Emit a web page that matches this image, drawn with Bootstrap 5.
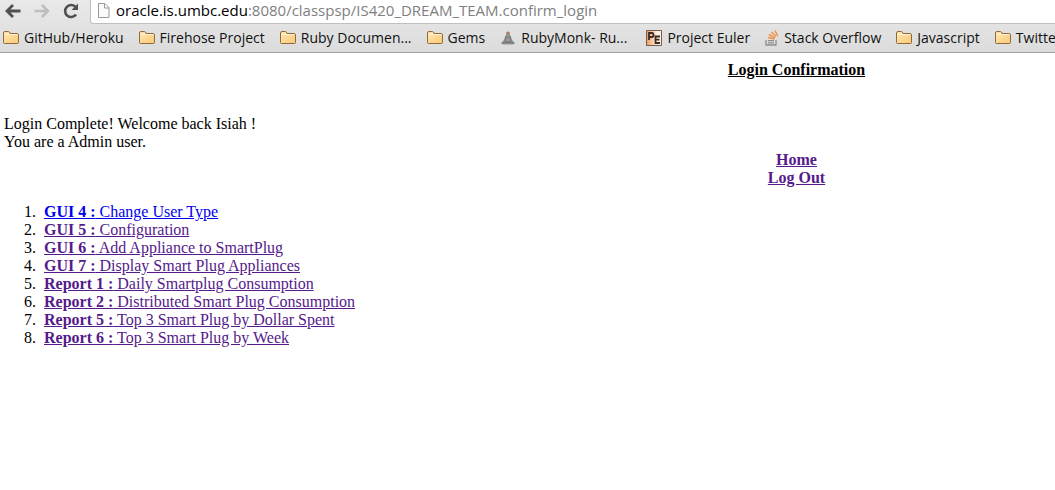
<!DOCTYPE html>
<html lang="en">
<head>
<meta charset="utf-8">
<meta name="viewport" content="width=device-width, initial-scale=1">
<title>Login Confirmation</title>
<link href="https://cdn.jsdelivr.net/npm/bootstrap@5.3.0/dist/css/bootstrap.min.css" rel="stylesheet">
<style>
body { background: #fff; color: #000; font: 16px/18px "Liberation Serif", serif; overflow-x: hidden; }
.browser { background: linear-gradient(#e9e9e9, #dcdcdc); border-bottom: 1px solid #a0a0a0; font-family: "Open Sans", "Noto Sans", sans-serif; overflow: hidden; }
.toolbar-row { height: 24px; }
.tool { width: 29px; height: 21px; }
.tool svg { margin-right: 4px; }
.address { background: #fff; border: 1px solid #bfbfbf; border-top: 0; border-right: 0; border-bottom-left-radius: 3px; margin-left: 3px; padding-left: 6px; height: 24px; }
.url { font-size: 15px; line-height: 20px; color: #808080; white-space: nowrap; }
.url b { font-weight: 400; color: #000; }
.page-mark { margin-right: 6px; }
.bookmarks { height: 28px; padding-left: 3px; gap: 15px; }
.bookmarks a { color: #111; font-size: 14px; line-height: 20px; gap: 5px; }
.wide { width: 151%; padding: 8px 4px; }
.wide a { color: #551a8b; }
.wide a.fresh { color: #00e; }
.notice { margin-top: 36px; }
.choices { padding-left: 36px; margin: 16px 0; }
.choices li { padding-left: 4px; }
</style>
</head>
<body>
<svg class="position-absolute" width="0" height="0" aria-hidden="true">
  <defs>
    <linearGradient id="fold" x2="1" y2="1"><stop stop-color="#ffe9b5"/><stop offset="1" stop-color="#fbc873"/></linearGradient>
    <linearGradient id="eul" x2="1"><stop stop-color="#f09a5c"/><stop offset=".7" stop-color="#fff2e6"/></linearGradient>
  </defs>
  <symbol id="folder" viewBox="0 0 16 16"><path d="M.5 12.500V3Q.5 1.500 2 1.500H5.500Q6.500 1.500 7 3.500H14Q15.500 3.500 15.500 5V12.500Q15.500 13.500 14.500 13.500H1.500Q.5 13.500 .5 12.500Z" fill="url(#fold)" stroke="#8e693c"/><path d="M1.500 4.500H14.500" stroke="#fff3d3"/></symbol>
</svg>
<header class="browser">
  <div class="toolbar-row d-flex">
    <button class="tool btn p-0 border-0 d-flex align-items-center justify-content-center" aria-label="Back"><svg width="18" height="16" viewBox="0 0 18 16" fill="none" stroke="#505050" stroke-width="2.800"><path d="M16.500 8H3M9 2L3 8l6 6"/></svg></button>
    <button class="tool btn p-0 border-0 d-flex align-items-center justify-content-center" aria-label="Forward"><svg width="18" height="16" viewBox="0 0 18 16" fill="none" stroke="#bdbdbd" stroke-width="2.500"><path d="M1.500 8H15M9 2l6 6-6 6"/></svg></button>
    <button class="tool btn p-0 border-0 d-flex align-items-center justify-content-center" aria-label="Reload"><svg width="18" height="18" viewBox="0 0 18 18"><path d="M14 12.500A6 6 0 1 1 13.300 4.700" fill="none" stroke="#505050" stroke-width="2.600"/><path d="M16 1.500V8H9.500Z" fill="#505050"/></svg></button>
    <div class="address flex-grow-1 d-flex align-items-start">
      <svg class="page-mark flex-shrink-0" width="13" height="22" viewBox="0 0 13 22" fill="#fafafa" stroke="#999"><path d="M1.500 3.500H8L12 7.500V17.500H1.500ZM7.500 3.500V8H12"/></svg>
      <div class="url"><b>oracle.is.umbc.edu</b>:8080/classpsp/IS420_DREAM_TEAM.confirm_login</div>
    </div>
  </div>
  <nav class="bookmarks d-flex align-items-center text-nowrap" aria-label="Bookmarks">
    <a href="#" class="d-flex align-items-center flex-shrink-0 text-decoration-none"><svg width="16" height="16"><use href="#folder"/></svg>GitHub/Heroku</a>
    <a href="#" class="d-flex align-items-center flex-shrink-0 text-decoration-none"><svg width="16" height="16"><use href="#folder"/></svg>Firehose Project</a>
    <a href="#" class="d-flex align-items-center flex-shrink-0 text-decoration-none"><svg width="16" height="16"><use href="#folder"/></svg>Ruby Documen...</a>
    <a href="#" class="d-flex align-items-center flex-shrink-0 text-decoration-none"><svg width="16" height="16"><use href="#folder"/></svg>Gems</a>
    <a href="#" class="d-flex align-items-center flex-shrink-0 text-decoration-none me-1"><svg width="16" height="16" viewBox="0 0 16 16"><path d="M5.500 5.500Q8 4 10.500 5.500L12 10L15 13Q14 15 8 14.500Q2 15 1 13L4 10Z" fill="#8b918c"/><circle cx="8" cy="3.500" r="2" fill="#a9806c"/><path d="M6 6L5 11L8 12.500L11 11L10 6M2 13L8 12L14 13" fill="none" stroke="#6e7571" stroke-width=".8"/><path d="M6 10h4" stroke="#c7a58e"/></svg>RubyMonk- Ru...</a>
    <a href="#" class="d-flex align-items-center flex-shrink-0 text-decoration-none"><svg width="16" height="16" viewBox="0 0 16 16"><path d="M.5.5h15v15H.5z" fill="url(#eul)" stroke="#705c50"/><path d="M3 10V3H6Q7.500 3 7.500 5T6 7H3M14 6.500H9.500V13H14M9.500 9.700H13.500" fill="none" stroke="#3e2923" stroke-width="1.800"/></svg>Project Euler</a>
    <a href="#" class="d-flex align-items-center flex-shrink-0 text-decoration-none"><svg width="14" height="16" viewBox="0 0 14 16" fill="none"><path d="M1 10V15H11V10M3 12.800H9M3 10.600H9" stroke="#8d8d8d" stroke-width="1.300"/><path d="M3 7.500L9.500 9M4 4.500L10 7.800M6.500 2L11 6.500M10 .5L12.700 6" stroke="#ee9143" stroke-width="1.500"/></svg>Stack Overflow</a>
    <a href="#" class="d-flex align-items-center flex-shrink-0 text-decoration-none"><svg width="16" height="16"><use href="#folder"/></svg>Javascript</a>
    <a href="#" class="d-flex align-items-center flex-shrink-0 text-decoration-none"><svg width="16" height="16"><use href="#folder"/></svg>Twitter</a>
  </nav>
</header>
<main class="overflow-hidden">
  <div class="wide">
    <div class="text-center fw-bold text-decoration-underline">Login Confirmation</div>
    <div class="notice">Login Complete! Welcome back Isiah !<br>You are a Admin user.</div>
    <div class="text-center fw-bold"><a href="#">Home</a><br><a href="#">Log Out</a></div>
    <ol class="choices">
      <li><a href="#" class="fresh"><b>GUI 4 :</b> Change User Type</a></li>
      <li><a href="#"><b>GUI 5 :</b> Configuration</a></li>
      <li><a href="#"><b>GUI 6 :</b> Add Appliance to SmartPlug</a></li>
      <li><a href="#"><b>GUI 7 :</b> Display Smart Plug Appliances</a></li>
      <li><a href="#"><b>Report 1 :</b> Daily Smartplug Consumption</a></li>
      <li><a href="#"><b>Report 2 :</b> Distributed Smart Plug Consumption</a></li>
      <li><a href="#"><b>Report 5 :</b> Top 3 Smart Plug by Dollar Spent</a></li>
      <li><a href="#"><b>Report 6 :</b> Top 3 Smart Plug by Week</a></li>
    </ol>
  </div>
</main>
<script src="https://cdn.jsdelivr.net/npm/bootstrap@5.3.0/dist/js/bootstrap.bundle.min.js"></script>
</body>
</html>
